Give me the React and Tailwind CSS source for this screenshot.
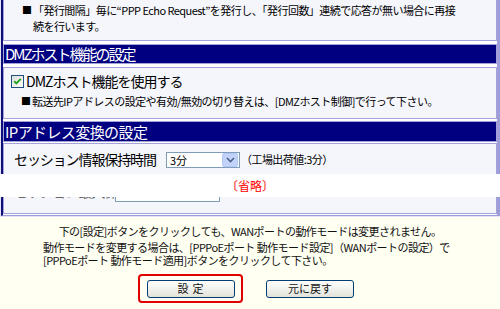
export default function App() {
  const box = "border-x border-[#a3a3da] bg-[#f5f6fc]";
  const small = "text-[11px] tracking-[-0.55px]";
  return (
    <div className="w-[500px] h-[309px] overflow-hidden bg-[#fffff2] text-black font-['Noto_Sans_CJK_JP','Noto_Sans_CJK_SC',sans-serif]">
      {/* upper frame */}
      <div className="h-[174px] overflow-hidden bg-[#e4e4f6] pl-px">
        <div className="h-[200px] border-l-2 border-l-[#10107a] border-r-[3px] border-r-[#9d9dd9] bg-white flex flex-col">
          {/* box 1 */}
          <div className={`${box} border-b h-[41px] pl-[18px] pt-[2px] leading-[16px] ${small}`}>
            <div className="flex whitespace-nowrap">
              <span className="w-[11px] shrink-0 text-[10px]">■</span>
              <div>
                <div>「発行間隔」毎に“PPP Echo Request”を発行し、「発行回数」連続で応答が無い場合に再接</div>
                <div>続を行います。</div>
              </div>
            </div>
          </div>
          {/* header 1 */}
          <div className="mt-[3px] h-[20px] border border-[#a3a3da] bg-[#000080] text-white text-[15px] tracking-[-2px] leading-[18px] pl-[1px] whitespace-nowrap">
            DMZホスト機能の設定
          </div>
          {/* box 2 */}
          <div className={`${box} border-y mt-[3px] h-[52px]`}>
            <div className="flex items-center h-[26px] pl-[7px] gap-[2px]">
              <svg width="13" height="13" viewBox="0 0 13 13" className="shrink-0">
                <defs>
                  <linearGradient id="cb" x1="0" y1="0" x2="1" y2="1">
                    <stop offset="0" stopColor="#dcdcd7" />
                    <stop offset="1" stopColor="#ffffff" />
                  </linearGradient>
                </defs>
                <rect x="0.5" y="0.5" width="12" height="12" fill="url(#cb)" stroke="#1c5180" />
                <path d="M3.2 6.2 L5.3 8.4 L9.8 3.8" fill="none" stroke="#21a121" strokeWidth="1.8" />
              </svg>
              <span className="text-[14px] tracking-[-1px] leading-[18px] whitespace-nowrap">DMZホスト機能を使用する</span>
            </div>
            <div className={`flex pl-[17px] leading-[16px] whitespace-nowrap mt-[-1px] ${small}`}>
              <span className="w-[11px] shrink-0 text-[10px]">■</span>
              <span>転送先IPアドレスの設定や有効/無効の切り替えは、[DMZホスト制御]で行って下さい。</span>
            </div>
          </div>
          {/* header 2 */}
          <div className="mt-[2px] h-[21px] border border-[#a3a3da] bg-[#000080] text-white text-[15px] tracking-[-0.6px] leading-[19px] pl-[1px] whitespace-nowrap">
            IPアドレス変換の設定
          </div>
          {/* box 3 */}
          <div className={`${box} border-t mt-[1px] flex-1`}>
            <div className="flex items-center h-[31px] pl-[10px]">
              <span className="text-[14px] tracking-[-1.1px] whitespace-nowrap w-[152px]">セッション情報保持時間</span>
              <div className="flex items-center h-[16px] w-[74px] border border-[#7f9db9] bg-white">
                <span className="flex-1 text-[11px] leading-[14px] pl-[3px]">3分</span>
                <div className="w-[16px] h-[14px] mr-px rounded-[2px] bg-[#c1d3fb] border border-[#b5c8f5] flex items-center justify-center">
                  <svg width="9" height="6" viewBox="0 0 9 6">
                    <path d="M1 1 L4.5 4.5 L8 1" fill="none" stroke="#4d6185" strokeWidth="1.6" />
                  </svg>
                </div>
              </div>
              <span className={`whitespace-nowrap ml-[1px] ${small}`}>（工場出荷値:3分）</span>
            </div>
          </div>
        </div>
      </div>
      {/* omitted band */}
      <div className="h-[23px] bg-white flex items-center justify-center">
        <span className="text-[12px] text-[#ff0000] leading-none">〔省略〕</span>
      </div>
      {/* lower frame */}
      <div className="h-[20px] overflow-hidden bg-[#e4e4f6] pl-px">
        <div className="h-[19px] border-l-2 border-l-[#10107a] border-r-[3px] border-r-[#9d9dd9] border-b border-b-[#9d9dd9] bg-white">
          <div className={`${box} border-b h-[17px] relative overflow-hidden`}>
            <span className="absolute left-[10px] top-[-16px] text-[14px] tracking-[-1.1px] text-[#666] whitespace-nowrap">セッション最大保持数</span>
            <div className="absolute left-[111px] top-[-10px] w-[105px] h-[15px] border border-[#7f9db9] bg-white" />
          </div>
        </div>
      </div>
      {/* bottom notes */}
      <div className={`leading-[14px] text-[#111] whitespace-nowrap ${small}`}>
        <div className="text-center mt-[7px]">下の[設定]ボタンをクリックしても、WANポートの動作モードは変更されません。</div>
        <div className="pl-[43px] mt-[3px] leading-[13px]">
          <div>動作モードを変更する場合は、[PPPoEポート 動作モード設定]（WANポートの設定）で</div>
          <div>[PPPoEポート 動作モード適用]ボタンをクリックして下さい。</div>
        </div>
        <div className="flex mt-[7px] pl-[138px] items-center tracking-normal">
          <div className="w-[105px] h-[29px] border-2 border-[#e00000] rounded-[4px] flex items-center justify-center">
            <button className="w-[88px] h-[18px] rounded-[3px] border border-[#003c74] bg-gradient-to-b from-white to-[#e3e3db] text-[11px] leading-none tracking-[4px] pl-[4px]">設定</button>
          </div>
          <button className="ml-[23px] w-[88px] h-[18px] rounded-[3px] border border-[#003c74] bg-gradient-to-b from-white to-[#e3e3db] text-[11px] leading-none">元に戻す</button>
        </div>
      </div>
    </div>
  );
}
